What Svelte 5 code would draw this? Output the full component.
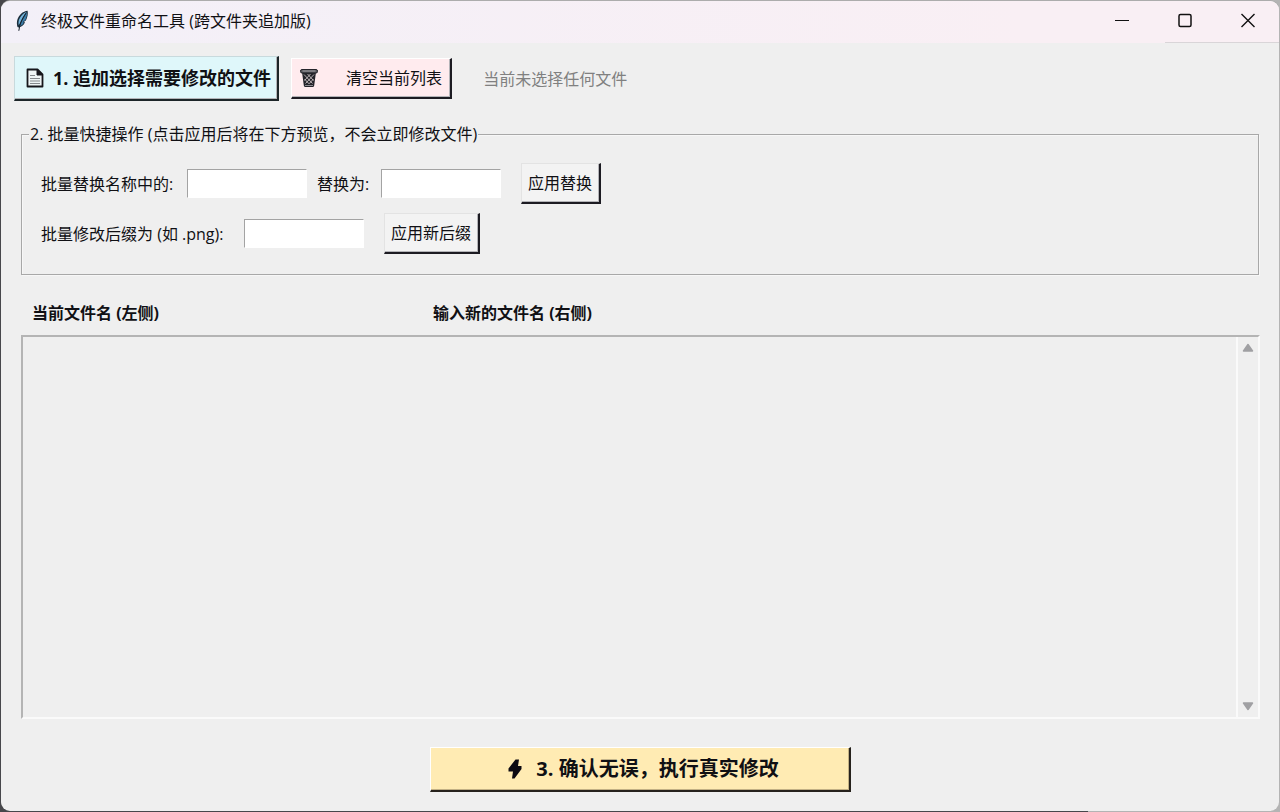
<script>
  let find = $state('');
  let replacement = $state('');
  let suffix = $state('');
</script>

<div class="desktop">
  <main class="window">
    <header class="titlebar">
      <svg class="feather" viewBox="0 0 14 22" width="14" height="22" aria-hidden="true">
        <path d="M12.6 0.8C8 1 3.400 5.600 2.200 10.200c-.5 2.400-.4 4.800.3 6.800l1 .6c3.400-.6 5.800-3 6.400-5.600l-1-.3 2-1.300C12.600 7.600 13.200 3.600 12.600.8z" fill="#1c2f3d" />
        <path d="M11.600 1.900C8 3 4.600 7 3.700 11c-.3 1.700-.2 3 .1 4.200C6 11 8.600 6 11.600 1.900z" fill="#74b4dc" />
        <path d="M11.900 2.600C9.600 6.300 6.500 11.500 4.600 16c2.200-.7 3.600-2 4.200-3.600l-1-.3 2.400-1.900c1.300-2.300 2-5.200 1.700-7.600z" fill="#3b7ca8" />
        <path d="M10.800 3.200C7.600 8 4.800 13 3.800 20.800" fill="none" stroke="#16212b" stroke-width="1" />
      </svg>
      <h1>终极文件重命名工具 (跨文件夹追加版)</h1>
      <div class="controls">
        <button aria-label="最小化">
          <svg viewBox="0 0 16 16" width="16" height="16"><path d="M1 7.500h14" /></svg>
        </button>
        <button aria-label="最大化">
          <svg viewBox="0 0 16 16" width="16" height="16"><rect x="2" y="1.500" width="12" height="12" rx="1.500" stroke-width="1.500" /></svg>
        </button>
        <button aria-label="关闭">
          <svg viewBox="0 0 16 16" width="16" height="16"><path d="M1.500 1l13 13M14.500 1l-13 13" stroke-width="1.400" /></svg>
        </button>
      </div>
    </header>

    <div class="toolbar">
      <button class="raised add">
        <svg viewBox="0 0 18 20" width="18" height="20" aria-hidden="true">
          <path d="M1.500 1.500h10l5 5v12h-15z" fill="#eef4f5" stroke="#17171c" stroke-width="1.800" stroke-linejoin="round" />
          <path d="M11 1.500V7h5.500z" fill="#17171c" stroke="#17171c" />
          <path d="M4 7.500h5M4 10.500h10M4 13h10M4 15.500h10" stroke="#85898d" stroke-width="1.200" />
        </svg>
        <span>1. 追加选择需要修改的文件</span>
      </button>
      <button class="raised clear">
        <svg viewBox="0 0 18 20" width="18" height="20" aria-hidden="true">
          <path d="M2 4h14l-1.800 13.500q-.2 1.500-1.700 1.500h-7q-1.500 0-1.700-1.500z" fill="#24242a" />
          <rect x="0.500" y="1.500" width="17" height="3.500" rx="1.500" fill="#55555b" stroke="#24242a" />
          <path d="M2.500 3h13" stroke="#a5a2a6" stroke-width="1" />
          <path d="M4 6.500l8.500 9M7.500 6l6 6.500M4.500 11l4.500 4.800M14 6.500l-8.500 9M10.500 6l-6 6.500M13.500 11L9 15.800" fill="none" stroke="#c9bfc2" stroke-width="0.900" />
          <path d="M5 17.500h8" stroke="#8b898e" />
        </svg>
        <span>清空当前列表</span>
      </button>
      <p>当前未选择任何文件</p>
    </div>

    <fieldset>
      <legend>2. 批量快捷操作 (点击应用后将在下方预览，不会立即修改文件)</legend>
      <div class="row">
        <label class="wide" for="find">批量替换名称中的:</label>
        <input id="find" type="text" bind:value={find} />
        <label for="replacement">替换为:</label>
        <input id="replacement" type="text" bind:value={replacement} />
        <button class="raised">应用替换</button>
      </div>
      <div class="row">
        <label class="widest" for="suffix">批量修改后缀为 (如 .png):</label>
        <input id="suffix" type="text" bind:value={suffix} />
        <button class="raised">应用新后缀</button>
      </div>
    </fieldset>

    <div class="heads">
      <h2>当前文件名 (左侧)</h2>
      <h2>输入新的文件名 (右侧)</h2>
    </div>

    <section class="list">
      <div class="files"></div>
      <div class="scrollbar">
        <button aria-label="向上滚动">
          <svg viewBox="0 0 12 10" width="12" height="10"><path d="M6 1.500L10.500 8h-9z" /></svg>
        </button>
        <button aria-label="向下滚动">
          <svg viewBox="0 0 12 10" width="12" height="10"><path d="M6 8.500L10.500 2h-9z" /></svg>
        </button>
      </div>
    </section>

    <footer>
      <button class="raised run">
        <svg viewBox="0 0 14 20" width="14" height="20" aria-hidden="true">
          <path d="M7.500 .5h3.500l-1 6.500h3.500v3L6.500 19.500H4l1-7H.5V9.500z" fill="#0d0a12" />
        </svg>
        <span>3. 确认无误，执行真实修改</span>
      </button>
    </footer>
  </main>
</div>

<style>
  :global(body) {
    margin: 0;
  }

  .desktop {
    box-sizing: border-box;
    min-height: 100vh;
    padding: 1px;
    display: flex;
    background: linear-gradient(90deg, #47474b 0 85%, #b4b4b4 85%);
    font-family: "Open Sans", "Noto Sans CJK SC", sans-serif;
    font-size: 16px;
    line-height: 24px;
    color: #101014;
  }

  .window {
    flex: 1;
    min-width: 0;
    display: flex;
    flex-direction: column;
    background: #efefef;
    border-radius: 9px;
    overflow: hidden;
    box-shadow: 0 -1px #acacac;
  }

  h1,
  h2,
  p {
    margin: 0;
    font-size: 16px;
    font-weight: 400;
  }

  h2 {
    font-weight: 700;
  }

  button {
    font: inherit;
    color: inherit;
    margin: 0;
    padding: 0;
    border: 0;
    background: none;
  }

  svg {
    display: block;
    flex: none;
  }

  .titlebar {
    box-sizing: border-box;
    height: 42px;
    flex: none;
    display: flex;
    align-items: center;
    gap: 12px;
    padding: 0 0 2px 14px;
    background:
      linear-gradient(#d9d5d8, #d9d5d8) right bottom / 114px 1px no-repeat,
      linear-gradient(90deg, #f3f0f8, #f9eff4 80%);
  }

  .controls {
    margin-left: auto;
    align-self: stretch;
    display: flex;
  }

  .controls button {
    width: 63px;
    display: grid;
    place-items: center;
  }

  .controls path,
  .controls rect {
    fill: none;
    stroke: #111;
  }

  .toolbar {
    display: flex;
    align-items: center;
    padding: 13px 13px 0;
  }

  .raised {
    box-sizing: border-box;
    height: 41px;
    padding: 0 7px 0 6px;
    border: 2px solid;
    border-width: 1px 2px 2px 1px;
    border-color: #e3e3e3 #1c1b22 #1c1b22 #e3e3e3;
    background: #f3f3f3;
    box-shadow: inset -1px -1px #b4b4b8;
    display: flex;
    align-items: center;
    white-space: nowrap;
  }

  .add {
    height: 45px;
    gap: 9px;
    padding: 0 6px 0 11px;
    background: #dff7fa;
    border-color: #c8dadd #1c2528 #1c2528 #c8dadd;
    font-size: 18px;
    font-weight: 700;
  }

  .clear {
    margin: 0 31px 0 12px;
    gap: 28px;
    padding: 0 8px;
    background: #ffebee;
    border-color: #fff #1c1b22 #1c1b22 #fff;
  }

  .toolbar p {
    color: #808080;
  }

  fieldset {
    margin: 21px 20px 0;
    padding: 17px 19px 20px;
    min-width: 0;
    border: 1px solid #a8a8a8;
    box-shadow: inset 1px 1px #f7f7f7, 1px 1px #f7f7f7;
  }

  legend {
    margin-left: -12px;
    padding: 0 1px;
    background: #efefef;
  }

  .row {
    display: flex;
    align-items: center;
  }

  .row + .row {
    margin-top: 9px;
  }

  label {
    min-width: 54px;
  }

  .wide {
    min-width: 136px;
  }

  .widest {
    min-width: 193px;
  }

  input {
    box-sizing: border-box;
    width: 120px;
    height: 29px;
    margin: 0 10px;
    padding: 2px 4px;
    border: 1px solid;
    border-color: #a3a3a3 #fff #fff #a3a3a3;
    border-radius: 0;
    background: #fff;
    font: inherit;
  }

  .row .raised {
    margin-left: 10px;
  }

  .heads {
    display: grid;
    grid-template-columns: 401px 1fr;
    padding: 26px 31px 10px;
  }

  .list {
    flex: 1;
    min-height: 120px;
    margin: 0 19px 0 20px;
    display: flex;
    border: 2px solid;
    border-color: #b4b4b4 #fafafa #fafafa #b4b4b4;
  }

  .files {
    flex: 1;
  }

  .scrollbar {
    width: 20px;
    display: flex;
    flex-direction: column;
    justify-content: space-between;
    padding: 6px 0;
    border-left: 2px solid #fafafa;
  }

  .scrollbar button {
    display: grid;
    place-items: center;
  }

  .scrollbar path {
    fill: #a0a0a3;
    stroke: #a0a0a3;
    stroke-width: 1.500;
    stroke-linejoin: round;
  }

  footer {
    display: flex;
    justify-content: center;
    padding: 28px 20px 19px;
  }

  .run {
    width: 421px;
    height: 45px;
    padding: 0 0 0 8px;
    justify-content: center;
    gap: 14px;
    background: #ffebb3;
    border-color: #fff #26221c #26221c #fff;
    box-shadow: inset -1px -1px #c2b084;
    font-size: 20px;
    font-weight: 700;
  }
</style>
